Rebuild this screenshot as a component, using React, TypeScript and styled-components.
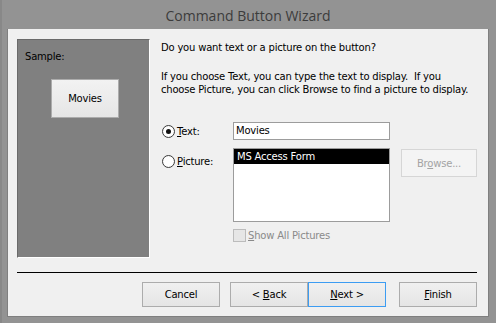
import styled, { createGlobalStyle } from 'styled-components';

const GlobalStyle = createGlobalStyle`
  html, body {
    margin: 0;
    padding: 0;
    background: #939393;
  }
  * {
    box-sizing: border-box;
  }
`;

const uiFont = `'DejaVu Sans', 'Liberation Sans', sans-serif`;

const Window = styled.div`
  width: 496px;
  height: 323px;
  background: #939393;
  border-left: 2px solid #888888;
  padding: 0 7px 6px 5px;
  display: flex;
  flex-direction: column;
  font-family: ${uiFont};
  font-size: 10px;
  letter-spacing: -0.2px;
  color: #000;
`;

const TitleBar = styled.div`
  height: 29px;
  display: flex;
  align-items: center;
  justify-content: center;
  padding-top: 1px;
  font-family: 'Open Sans', 'Noto Sans', sans-serif;
  font-size: 14px;
  letter-spacing: 0;
  color: #3c3c3c;
`;

const Client = styled.div`
  flex: 1;
  background: #f0f0f0;
  border: 1px solid #7f7f7f;
  border-top: 0;
  padding: 10px 11px 0 9px;
  display: flex;
  flex-direction: column;
`;

const Body = styled.div`
  display: flex;
  gap: 11px;
  height: 219px;
`;

const SamplePanel = styled.div`
  flex: 0 0 133px;
  background: #808080;
  border-top: 1px solid #6a6a6a;
  border-left: 1px solid #6a6a6a;
  border-right: 1px solid #ffffff;
  border-bottom: 1px solid #ffffff;
  padding: 10px 0 0 7px;
  display: flex;
  flex-direction: column;
`;

const SampleLabel = styled.div`
  line-height: 13px;
`;

const SampleButton = styled.div`
  margin: 16px 0 0 26px;
  width: 68px;
  height: 39px;
  background: linear-gradient(#f2f2f2, #e6e6e6);
  border: 1px solid #acacac;
  display: flex;
  align-items: center;
  justify-content: center;
`;

const Content = styled.div`
  flex: 1;
  display: flex;
  flex-direction: column;
  padding-top: 2px;
`;

const Para = styled.p<{ $gap?: number }>`
  margin: 0 0 ${(p) => p.$gap ?? 0}px;
  line-height: 13px;
`;

const Options = styled.div`
  display: grid;
  grid-template-columns: 61px 157px 76px;
  column-gap: 11px;
  row-gap: 8px;
  align-items: start;
`;

const RadioLabel = styled.label<{ $top: number }>`
  display: flex;
  align-items: center;
  gap: 2px;
  line-height: 13px;
  margin: ${(p) => p.$top}px 0 0 1px;
`;

const RadioCircle = styled.span<{ $checked?: boolean }>`
  width: 13px;
  height: 13px;
  border-radius: 50%;
  border: 1px solid #3b3b3b;
  background: radial-gradient(circle, #ffffff 55%, #e8e8e8 100%);
  display: flex;
  align-items: center;
  justify-content: center;
  &::after {
    content: '';
    width: 5px;
    height: 5px;
    border-radius: 50%;
    background: ${(p) => (p.$checked ? '#111' : 'transparent')};
  }
`;

const Key = styled.span`
  text-decoration: underline;
`;

const TextBox = styled.div`
  height: 18px;
  background: #fff;
  border: 1px solid #9c9c9c;
  padding: 1px 2px;
  line-height: 14px;
`;

const ListBox = styled.div`
  height: 74px;
  background: #fff;
  border: 1px solid #9c9c9c;
`;

const ListItem = styled.div<{ $selected?: boolean }>`
  height: 15px;
  line-height: 15px;
  padding-left: 3px;
  background: ${(p) => (p.$selected ? '#000' : 'transparent')};
  color: ${(p) => (p.$selected ? '#fff' : '#000')};
`;

const BrowseButton = styled.div`
  height: 28px;
  margin-top: 1px;
  background: #f4f4f4;
  border: 1px solid #d6d6d6;
  color: #a3a3a3;
  display: flex;
  align-items: center;
  justify-content: center;
`;

const CheckRow = styled.div`
  grid-column: 2 / 4;
  display: flex;
  align-items: center;
  gap: 2px;
  margin-top: -1px;
  color: #8a8a8a;
  line-height: 13px;
`;

const CheckBox = styled.span`
  width: 13px;
  height: 13px;
  background: #e6e6e6;
  border: 1px solid #bcbcbc;
`;

const Separator = styled.div`
  margin-top: 14px;
  height: 1px;
  background: #000;
`;

const ButtonRow = styled.div`
  margin-top: 9px;
  display: flex;
  justify-content: flex-end;
`;

const Button = styled.div<{ $focused?: boolean; $gap?: number }>`
  width: 78px;
  height: 25px;
  margin-left: ${(p) => p.$gap ?? 0}px;
  background: linear-gradient(#f0f0f0, #e5e5e5);
  border: 1px solid ${(p) => (p.$focused ? '#3c9cf2' : '#acacac')};
  display: flex;
  align-items: center;
  justify-content: center;
`;

export default function App() {
  return (
    <>
      <GlobalStyle />
      <Window>
        <TitleBar>Command Button Wizard</TitleBar>
        <Client>
          <Body>
            <SamplePanel>
              <SampleLabel>Sample:</SampleLabel>
              <SampleButton>Movies</SampleButton>
            </SamplePanel>
            <Content>
              <Para $gap={16}>Do you want text or a picture on the button?</Para>
              <Para $gap={26}>
                If you choose Text, you can type the text to display.&nbsp; If you
                <br />
                choose Picture, you can click Browse to find a picture to display.
              </Para>
              <Options>
                <RadioLabel $top={3}>
                  <RadioCircle $checked />
                  <span>
                    <Key>T</Key>ext:
                  </span>
                </RadioLabel>
                <TextBox>Movies</TextBox>
                <div />
                <RadioLabel $top={7}>
                  <RadioCircle />
                  <span>
                    <Key>P</Key>icture:
                  </span>
                </RadioLabel>
                <ListBox>
                  <ListItem $selected>MS Access Form</ListItem>
                </ListBox>
                <BrowseButton>
                  <span>
                    Br<Key>o</Key>wse...
                  </span>
                </BrowseButton>
                <div />
                <CheckRow>
                  <CheckBox />
                  <span>
                    <Key>S</Key>how All Pictures
                  </span>
                </CheckRow>
              </Options>
            </Content>
          </Body>
          <Separator />
          <ButtonRow>
            <Button>Cancel</Button>
            <Button $gap={10}>
              <span>
                &lt; <Key>B</Key>ack
              </span>
            </Button>
            <Button $focused>
              <span>
                <Key>N</Key>ext &gt;
              </span>
            </Button>
            <Button $gap={13}>
              <span>
                <Key>F</Key>inish
              </span>
            </Button>
          </ButtonRow>
        </Client>
      </Window>
    </>
  );
}
